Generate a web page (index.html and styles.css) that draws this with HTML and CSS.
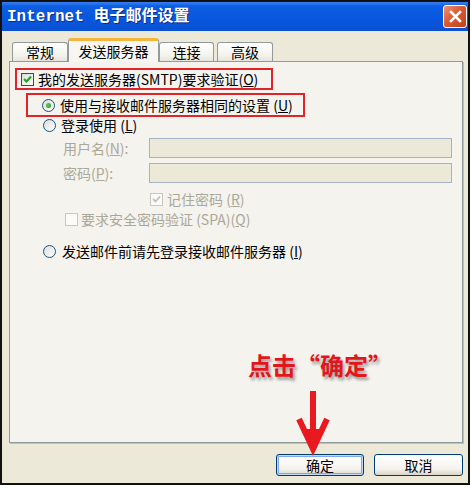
FILE: index.html
```html
<!DOCTYPE html>
<html lang="zh-CN">
<head>
<meta charset="utf-8">
<title>Internet 电子邮件设置</title>
<link rel="stylesheet" href="styles.css">
</head>
<body>
<div class="frame">
  <div class="titlebar">
    <span class="title">Internet 电子邮件设置</span>
    <span class="close"><svg width="13" height="13" viewBox="0 0 13 13"><path d="M2 2 L11 11 M11 2 L2 11" stroke="#fff" stroke-width="2.6" stroke-linecap="square"/></svg></span>
  </div>
  <div class="client">
    <div class="tabs">
      <div class="tab t1">常规</div>
      <div class="tab active">发送服务器</div>
      <div class="tab t3">连接</div>
      <div class="tab t4">高级</div>
    </div>
    <div class="panel">
      <div class="row mark1">
        <span class="cb"><svg width="11" height="11" viewBox="0 0 11 11"><path d="M2 5 L4.5 7.5 L9 2.5" fill="none" stroke="#21A121" stroke-width="2"/></svg></span>
        <span>我的发送服务器(SMTP)要求验证(<u>O</u>)</span>
      </div>
      <div class="row mark2">
        <span class="radio on"></span>
        <span>使用与接收邮件服务器相同的设置 (<u>U</u>)</span>
      </div>
      <div class="row r3">
        <span class="radio"></span>
        <span>登录使用 (<u>L</u>)</span>
      </div>
      <div class="field f1">
        <span class="label dis">用户名(<u>N</u>):</span>
        <span class="input"></span>
      </div>
      <div class="field f2">
        <span class="label dis">密码(<u>P</u>):</span>
        <span class="input"></span>
      </div>
      <div class="row r6 dis">
        <span class="cb off"><svg width="11" height="11" viewBox="0 0 11 11"><path d="M2 5 L4.5 7.5 L9 2.5" fill="none" stroke="#C4C2B4" stroke-width="1.8"/></svg></span>
        <span>记住密码 (<u>R</u>)</span>
      </div>
      <div class="row r7 dis">
        <span class="cb off"></span>
        <span>要求安全密码验证 (SPA)(<u>Q</u>)</span>
      </div>
      <div class="row r8">
        <span class="radio"></span>
        <span>发送邮件前请先登录接收邮件服务器 (<u>I</u>)</span>
      </div>
    </div>
    <div class="buttons">
      <div class="btn default">确定</div>
      <div class="btn">取消</div>
    </div>
  </div>
  <div class="caption">点击“确定”</div>
  <svg class="arrow" width="46" height="70" viewBox="0 0 46 70">
    <path d="M23 3 L23 56" stroke="#E8191F" stroke-width="6"/>
    <path d="M9 31 L23 61 L37 31" fill="none" stroke="#E8191F" stroke-width="6" stroke-linejoin="miter"/>
    <path d="M15 41 L23 60 L31 41 Z" fill="#E8191F"/>
  </svg>
</div>
</body>
</html>
```

FILE: styles.css
```css
* { box-sizing: border-box; margin: 0; padding: 0; }
html, body { width: 472px; height: 488px; background: #fff; overflow: hidden; }
body { font-family: "Noto Sans CJK SC", "Noto Sans", sans-serif; font-size: 14px; color: #000; line-height: 16px; }
u { text-decoration: underline; text-underline-offset: 1px; }

.frame {
  width: 470px; height: 485px;
  border: 2px solid #111;
  display: flex; flex-direction: column;
  position: relative;
  background: #ECE9D8;
}

.titlebar {
  height: 29px; flex: none;
  display: flex; align-items: center; justify-content: space-between;
  padding: 0 1px 0 5px;
  background: linear-gradient(#3A80F0 0%, #0D5EE2 14%, #0756DE 60%, #0A50D2 100%);
}
.title {
  color: #fff;
  font-family: "Liberation Mono", "Noto Sans CJK SC", monospace;
  font-weight: bold; font-size: 16px; line-height: 20px;
  text-shadow: 1px 1px 0 #0A2E8C;
}
.close {
  width: 24px; height: 23px;
  border: 1px solid #fff; border-radius: 3px;
  background: linear-gradient(135deg, #EE9376 0%, #DA5A35 45%, #C2401A 100%);
  display: flex; align-items: center; justify-content: center;
}

.client {
  flex: 1;
  padding: 7px 5px 0 7px;
  display: flex; flex-direction: column;
}

.tabs {
  height: 23px; flex: none;
  display: flex; align-items: flex-end;
  padding-left: 3px;
}
.tab {
  height: 19px;
  border: 1px solid #919B9C; border-bottom: none;
  border-radius: 3px 3px 0 0;
  background: linear-gradient(#FFFFFF, #F3F2EC 70%, #E6E4DA);
  display: flex; align-items: center; justify-content: center;
  font-size: 14px; line-height: 16px;
}
.t1 { width: 56px; }
.t3 { width: 55px; }
.t4 { width: 56px; margin-left: 3px; }
.tab.active {
  width: 91px; height: 24px;
  margin-bottom: -1px;
  position: relative; z-index: 1;
  border-top: 3px solid #F6B43A;
  background: #F7F6F2;
  align-items: flex-start; padding-top: 2px;
}

.panel {
  height: 382px; flex: none;
  border: 1px solid #919B9C;
  background: #F4F3EE;
  box-shadow: 1px 1px 0 #C3C0B0;
  padding-top: 6px;
  display: flex; flex-direction: column; align-items: flex-start;
}

.row { display: flex; align-items: center; height: 16px; }
.dis { color: #ACA899; }

.mark1 {
  margin-left: 5px; width: 258px; height: 22px;
  border: 2px solid #E0242A;
  padding-left: 4px; gap: 4px;
}
.mark2 {
  margin-top: 3px; margin-left: 16px; width: 279px; height: 24px;
  border: 2px solid #E0242A;
  padding-left: 14px; gap: 5px;
}
.r3 { margin-left: 33px; gap: 5px; }
.field { display: flex; align-items: center; height: 20px; margin-top: 5px; margin-left: 53px; }
.label { width: 86px; }
.input {
  width: 303px; height: 20px;
  border: 1px solid #A4B4C8;
  background: #ECE9D8;
}
.r6 { margin-top: 8px; margin-left: 140px; gap: 4px; }
.r7 { margin-top: 4px; margin-left: 55px; gap: 3px; }
.r8 { margin-top: 16px; margin-left: 33px; gap: 6px; }

.cb {
  width: 13px; height: 13px; flex: none;
  border: 1px solid #1C5180;
  background: linear-gradient(135deg, #DCDCD7, #FFFFFF);
  display: flex; align-items: center; justify-content: center;
}
.cb.off { border-color: #CAC8BB; background: #FBFBF9; }

.radio {
  width: 13px; height: 13px; flex: none;
  border: 1px solid #1C5180; border-radius: 50%;
  background: linear-gradient(135deg, #DCDCD7, #FFFFFF);
  display: flex; align-items: center; justify-content: center;
}
.radio.on::after {
  content: "";
  width: 5px; height: 5px; border-radius: 50%;
  background: radial-gradient(circle at 40% 40%, #5CD05C, #1A8A1A);
}

.buttons {
  display: flex; justify-content: flex-end; gap: 10px;
  margin-top: 11px;
}
.btn {
  width: 88px; height: 22px;
  border: 1px solid #003C74; border-radius: 3px;
  background: linear-gradient(#FFFFFF, #F4F3EE 70%, #D9D5C9);
  display: flex; align-items: center; justify-content: center;
  font-size: 14px;
}
.btn + .btn { width: 89px; }
.btn.default { box-shadow: inset 0 0 0 1px #C2D8F8, inset 0 0 0 2px #86A8E2; }

.caption {
  position: absolute; left: 246px; top: 351px;
  font-size: 24px; line-height: 24px; font-weight: bold;
  color: #E4161C;
  text-shadow: 2px 3px 3px rgba(0, 0, 0, 0.35);
  white-space: nowrap;
}
.arrow { position: absolute; left: 288px; top: 386px; }
```
